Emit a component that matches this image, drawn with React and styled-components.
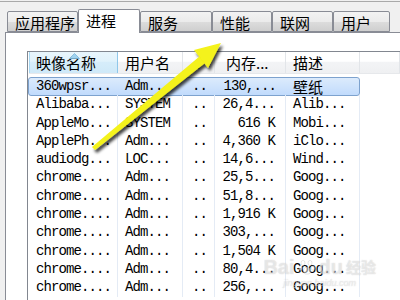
import React from "react";
import styled, { createGlobalStyle } from "styled-components";

const cjk = `"Noto Sans CJK SC", "Noto Sans", sans-serif`;
const mono = `"Liberation Mono", "Noto Sans CJK SC", monospace`;

const GlobalStyle = createGlobalStyle`
  html, body {
    margin: 0;
    padding: 0;
    background: #f0f0f0;
    overflow: hidden;
  }
`;

const tabs = [
  { label: "应用程序", width: 71 },
  { label: "进程", width: 62, active: true },
  { label: "服务", width: 72 },
  { label: "性能", width: 60 },
  { label: "联网", width: 61 },
  { label: "用户", width: 57 }
];

const columns = [
  { key: "name", label: "映像名称", width: 89, sorted: true },
  { key: "user", label: "用户名", width: 65 },
  { key: "cpu", label: "..", width: 32, pad: 9 },
  { key: "mem", label: "内存...", width: 71, pad: 11, right: true },
  { key: "desc", label: "描述", width: 74 }
];

const rows = [
  ["360wpsr...", "Adm...", "..", "130,...", "壁纸"],
  ["Alibaba...", "SYSTEM", "..", "26,4...", "Alib..."],
  ["AppleMo...", "SYSTEM", "..", "616 K", "Mobi..."],
  ["ApplePh...", "Adm...", "..", "4,360 K", "iClo..."],
  ["audiodg...", "LOC...", "..", "14,6...", "Wind..."],
  ["chrome....", "Adm...", "..", "25,5...", "Goog..."],
  ["chrome....", "Adm...", "..", "51,8...", "Goog..."],
  ["chrome....", "Adm...", "..", "1,916 K", "Goog..."],
  ["chrome....", "Adm...", "..", "303,...", "Goog..."],
  ["chrome....", "Adm...", "..", "1,504 K", "Goog..."],
  ["chrome....", "Adm...", "..", "80,4...", "Goog..."],
  ["chrome....", "Adm...", "..", "256,...", "Goog..."]
];

const gridCols = columns.map(c => `${c.width}px`).join(" ") + " 1fr";

const Window = styled.div`
  position: relative;
  width: 400px;
  height: 300px;
  overflow: hidden;
  background: #f0f0f0;
  display: flex;
  flex-direction: column;
`;

const TopEdge = styled.div`
  height: 1px;
  margin-top: 1px;
  background: #a9a9a9;
`;

const TabStrip = styled.div`
  height: 30px;
  display: flex;
  align-items: flex-end;
  padding-left: 7px;
`;

const Tab = styled.div`
  box-sizing: border-box;
  width: ${p => p.$w}px;
  height: ${p => (p.$active ? 24 : 21)}px;
  margin-bottom: ${p => (p.$active ? -1 : 0)}px;
  position: relative;
  z-index: ${p => (p.$active ? 2 : 1)};
  border: 1px solid #898c95;
  border-bottom: ${p => (p.$active ? "none" : "1px solid #898c95")};
  border-radius: 2px 2px 0 0;
  background: ${p =>
    p.$active
      ? "#ffffff"
      : "linear-gradient(#f3f3f3 0%, #ebebeb 50%, #dddddd 51%, #cfcfcf 100%)"};
  font-family: ${cjk};
  font-size: 15px;
  line-height: ${p => (p.$active ? 21 : 22)}px;
  color: #000;
  padding-left: 7px;
  white-space: nowrap;
`;

const Panel = styled.div`
  flex: 1;
  margin-left: 5px;
  background: #fff;
  border-left: 1px solid #898c95;
  border-top: 1px solid #898c95;
  padding: 18px 0 0 21px;
  display: flex;
  min-height: 0;
`;

const ListView = styled.div`
  flex: 1;
  border-left: 1px solid #828790;
  border-top: 1px solid #828790;
  padding-left: 1px;
  display: flex;
  flex-direction: column;
  background: #fff;
`;

const HeaderRow = styled.div`
  display: grid;
  grid-template-columns: ${gridCols};
  height: 21px;
  background: linear-gradient(#ffffff 0%, #ffffff 45%, #f3f4f6 46%, #eff0f2 100%);
  border-bottom: 1px solid #e6e8eb;
`;

const HeaderCell = styled.div`
  position: relative;
  box-sizing: border-box;
  font-family: ${cjk};
  font-size: 15px;
  line-height: 21px;
  color: #000;
  white-space: nowrap;
  overflow: hidden;
  border-right: 1px solid #e2e5e9;
  border-left: ${p => (p.$sorted ? "1px solid #a8d8f3" : "none")};
  padding-left: ${p => (p.$sorted ? 6 : p.$pad || 7)}px;
  ${p =>
    p.$sorted &&
    `
    background: linear-gradient(#e8f5fc 0%, #e1f2fb 45%, #d6edfa 46%, #cfe9f8 100%);
    border-right: 1px solid #8fc7ea;
  `}
`;

const SortArrow = styled.svg`
  position: absolute;
  top: 1px;
  left: 39px;
`;

const Body = styled.div`
  display: grid;
  grid-auto-rows: 18.3px;
  margin-top: 3px;
`;

const Row = styled.div`
  display: grid;
  grid-template-columns: ${gridCols};
`;

const Cell = styled.div`
  box-sizing: border-box;
  font-family: ${p => (p.$cjk ? cjk : mono)};
  font-size: ${p => (p.$cjk ? 15 : 14)}px;
  letter-spacing: ${p => (p.$cjk ? 0 : -0.9)}px;
  line-height: 19px;
  color: #000;
  white-space: nowrap;
  overflow: hidden;
  padding-left: ${p => (p.$right ? 0 : p.$pad || 7)}px;
  padding-right: ${p => (p.$right ? 10 : 0)}px;
  text-align: ${p => (p.$right ? "right" : "left")};
  border-right: ${p => (p.$last ? "none" : "1px solid #e4ebf5")};
`;

const SelectedBox = styled.div`
  grid-column: 1 / 6;
  display: grid;
  grid-template-columns: ${columns.map(c => `${c.width}px`).join(" ")};
  box-sizing: border-box;
  margin-left: -1px;
  border: 1px solid #7da2ce;
  border-radius: 3px;
  background: linear-gradient(#dcebfc, #c1dbfc);
  & > div {
    border-right: none;
    line-height: 17px;
    overflow: visible;
  }
`;

const Filler = styled.div``;

const Overlay = styled.svg`
  position: absolute;
  left: 0;
  top: 0;
  pointer-events: none;
  z-index: 5;
`;

const Watermark = styled.div`
  position: absolute;
  right: 24px;
  bottom: 12px;
  z-index: 4;
  display: flex;
  flex-direction: column;
  align-items: center;
  color: rgba(255, 255, 255, 0.45);
  text-shadow: 0 0 1px rgba(150, 150, 150, 0.25), 0 0 1px rgba(150, 150, 150, 0.25);
  pointer-events: none;
`;

const MarkTop = styled.div`
  display: flex;
  align-items: center;
  gap: 3px;
  font-family: "Liberation Sans", sans-serif;
  font-weight: bold;
  font-size: 20px;
  line-height: 22px;
`;

const MarkCn = styled.span`
  font-family: ${cjk};
  font-size: 15px;
  font-weight: bold;
`;

const MarkUrl = styled.div`
  font-family: "Liberation Sans", sans-serif;
  font-size: 9px;
  font-style: italic;
  line-height: 10px;
`;

function cellProps(col, i, value) {
  return {
    $pad: col.pad,
    $right: col.right,
    $cjk: /[\u4e00-\u9fff]/.test(value),
    $last: i === columns.length
  };
}

export default function App() {
  return (
    <>
      <GlobalStyle />
      <Window>
        <TopEdge />
        <TabStrip>
          {tabs.map(t => (
            <Tab key={t.label} $w={t.width} $active={t.active}>
              {t.label}
            </Tab>
          ))}
        </TabStrip>
        <Panel>
          <ListView>
            <HeaderRow>
              {columns.map(c => (
                <HeaderCell key={c.key} $sorted={c.sorted} $pad={c.pad}>
                  {c.sorted && (
                    <SortArrow width="11" height="6" viewBox="0 0 11 6">
                      <path d="M0.5 5.5 L5.5 0.5 L10.5 5.5 Z" fill="#9fd2ef" stroke="#7ab5da" strokeWidth="0.8" />
                    </SortArrow>
                  )}
                  {c.label}
                </HeaderCell>
              ))}
              <HeaderCell $pad={0} />
            </HeaderRow>
            <Body>
              {rows.map((r, ri) =>
                ri === 0 ? (
                  <Row key={ri}>
                    <SelectedBox>
                      {columns.map((c, i) => (
                        <Cell key={c.key} {...cellProps(c, i, r[i])}>
                          {r[i]}
                        </Cell>
                      ))}
                    </SelectedBox>
                    <Filler />
                  </Row>
                ) : (
                  <Row key={ri}>
                    {columns.map((c, i) => (
                      <Cell key={c.key} {...cellProps(c, i, r[i])}>
                        {r[i]}
                      </Cell>
                    ))}
                    <Filler />
                  </Row>
                )
              )}
            </Body>
          </ListView>
        </Panel>

        <Watermark>
          <MarkTop>
            <span>Bai</span>
            <svg width="18" height="18" viewBox="0 0 18 18">
              <g fill="rgba(255,255,255,0.5)" stroke="rgba(150,150,150,0.3)" strokeWidth="0.8">
                <ellipse cx="5" cy="5" rx="2" ry="2.6" />
                <ellipse cx="12" cy="5" rx="2" ry="2.6" />
                <ellipse cx="2.5" cy="10" rx="1.8" ry="2.2" />
                <ellipse cx="15" cy="10" rx="1.8" ry="2.2" />
                <path d="M9 9 C5 9 4 16 8 16 L10 16 C14 16 13 9 9 9 Z" />
              </g>
            </svg>
            <span>du</span>
            <MarkCn>经验</MarkCn>
          </MarkTop>
          <MarkUrl>jingyan.baidu.com</MarkUrl>
        </Watermark>

        <Overlay width="400" height="300" viewBox="0 0 400 300">
          <defs>
            <filter id="arrowShadow" x="-20%" y="-20%" width="140%" height="140%">
              <feDropShadow dx="2" dy="3" stdDeviation="1.6" floodColor="#000" floodOpacity="0.75" />
            </filter>
          </defs>
          <g filter="url(#arrowShadow)" fill="#f4f21a">
            <polygon points="92,147 95,150 205,63 200,56" />
            <polygon points="221,43 194,50 208,68" />
          </g>
        </Overlay>
      </Window>
    </>
  );
}
